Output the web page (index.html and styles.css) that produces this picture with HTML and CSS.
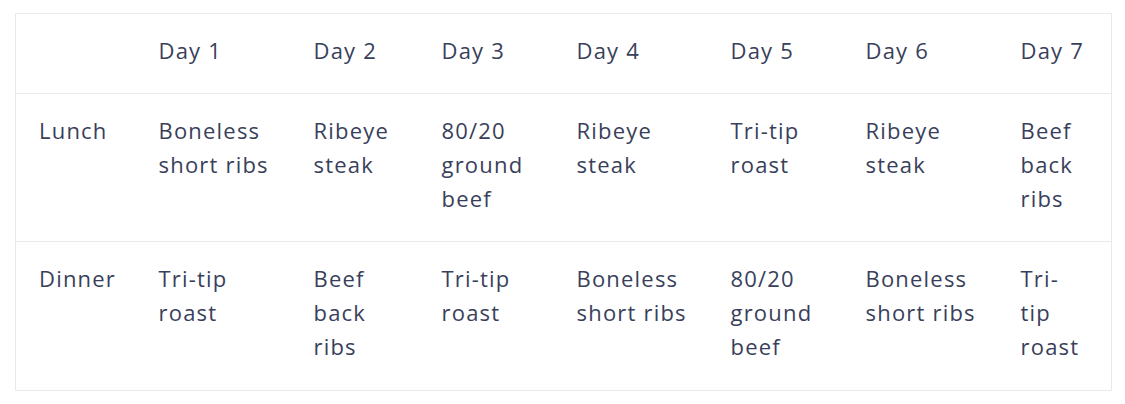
FILE: index.html
```html
<!DOCTYPE html>
<html>
<head>
<meta charset="utf-8">
<link rel="stylesheet" href="styles.css">
</head>
<body>
<table class="plan">
  <colgroup>
    <col class="c0"><col class="c1"><col class="c2"><col class="c3"><col class="c4"><col class="c5"><col class="c6"><col class="c7">
  </colgroup>
  <thead>
    <tr><th></th><th>Day 1</th><th>Day 2</th><th>Day 3</th><th>Day 4</th><th>Day 5</th><th>Day 6</th><th>Day 7</th></tr>
  </thead>
  <tbody>
    <tr><td>Lunch</td><td>Boneless short ribs</td><td>Ribeye steak</td><td>80/20 ground beef</td><td>Ribeye steak</td><td>Tri-tip roast</td><td>Ribeye steak</td><td>Beef back ribs</td></tr>
    <tr><td>Dinner</td><td>Tri-tip roast</td><td>Beef back ribs</td><td>Tri-tip roast</td><td>Boneless short ribs</td><td>80/20 ground beef</td><td>Boneless short ribs</td><td>Tri-tip roast</td></tr>
  </tbody>
</table>
</body>
</html>
```

FILE: styles.css
```css
html, body { margin: 0; padding: 0; background: #fff; }
body { padding: 13px 15px; }
.plan {
  border-collapse: collapse;
  table-layout: fixed;
  width: 1096px;
  border: 1px solid #e9e9ea;
  font-family: "Open Sans", sans-serif;
  font-size: 22px;
  line-height: 34px;
  letter-spacing: 1.2px;
  color: #393f5b;
}
.plan th, .plan td {
  text-align: left;
  vertical-align: top;
  font-weight: 400;
  padding: 19px 18px 26px 23px;
  border-top: 1px solid #e9e9ea;
}
.plan th { white-space: nowrap; }
.plan tbody tr:last-child td { padding-bottom: 27px; }
.plan th:last-child, .plan td:last-child { padding-right: 30px; }
.c0 { width: 120px; }
.c1 { width: 155px; }
.c2 { width: 128px; }
.c3 { width: 135px; }
.c4 { width: 154px; }
.c5 { width: 135px; }
.c6 { width: 155px; }
.c7 { width: 114px; }
```
